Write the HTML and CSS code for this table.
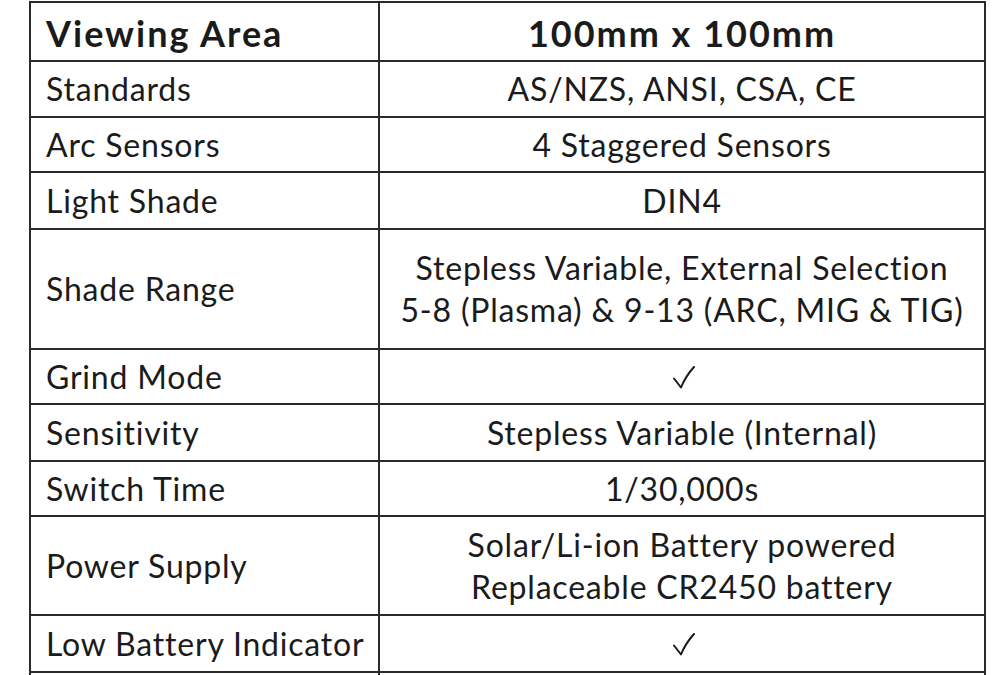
FILE: index.html
```html
<!DOCTYPE html>
<html lang="en">
<head>
<meta charset="utf-8">
<title>Specifications</title>
<link rel="stylesheet" href="styles.css">
</head>
<body>
<div class="specs">
  <div class="cell label head">Viewing Area</div>
  <div class="cell value head">100mm x 100mm</div>

  <div class="cell label">Standards</div>
  <div class="cell value">AS/NZS, ANSI, CSA, CE</div>

  <div class="cell label">Arc Sensors</div>
  <div class="cell value">4 Staggered Sensors</div>

  <div class="cell label">Light Shade</div>
  <div class="cell value">DIN4</div>

  <div class="cell label">Shade Range</div>
  <div class="cell value">Stepless Variable, External Selection<br>5-8 (Plasma) &amp; 9-13 (ARC, MIG &amp; TIG)</div>

  <div class="cell label">Grind Mode</div>
  <div class="cell value"><svg class="check" viewBox="0 0 22 23" width="22" height="23" aria-label="yes"><path d="M1 12.5 L8 21.5 C11 14 15.5 7 21 1" fill="none" stroke="#1b1b1b" stroke-width="2" stroke-linecap="round" stroke-linejoin="round"/></svg></div>

  <div class="cell label">Sensitivity</div>
  <div class="cell value">Stepless Variable (Internal)</div>

  <div class="cell label">Switch Time</div>
  <div class="cell value">1/30,000s</div>

  <div class="cell label">Power Supply</div>
  <div class="cell value">Solar/Li-ion Battery powered<br>Replaceable CR2450 battery</div>

  <div class="cell label">Low Battery Indicator</div>
  <div class="cell value"><svg class="check" viewBox="0 0 22 23" width="22" height="23" aria-label="yes"><path d="M1 12.5 L8 21.5 C11 14 15.5 7 21 1" fill="none" stroke="#1b1b1b" stroke-width="2" stroke-linecap="round" stroke-linejoin="round"/></svg></div>

  <div class="cell label"></div>
  <div class="cell value"></div>
</div>
</body>
</html>
```

FILE: styles.css
```css
html, body {
  margin: 0;
  padding: 0;
  background: #ffffff;
}

body {
  font-family: Lato, "Liberation Sans", sans-serif;
  color: #1b1b1b;
  overflow: hidden;
  height: 675px;
}

.specs {
  display: grid;
  grid-template-columns: 349px 606px;
  grid-template-rows: 59px 56px 55px 57px 120px 55px 57px 55px 99px 57px 60px;
  width: max-content;
  margin: 1px 0 0 29px;
  border-top: 2px solid #2a2a2a;
  border-left: 2px solid #2a2a2a;
}

.cell {
  box-sizing: border-box;
  border-right: 2px solid #2a2a2a;
  border-bottom: 2px solid #2a2a2a;
  display: flex;
  align-items: center;
  font-size: 32px;
  letter-spacing: 0.8px;
  line-height: 42px;
}

.label {
  padding-left: 15px;
}

.value {
  justify-content: center;
  text-align: center;
}

.head {
  font-size: 36px;
  font-weight: 700;
  letter-spacing: 2px;
  padding-top: 2px;
}

.check {
  display: block;
  margin-top: 2px;
  margin-left: 4px;
}
```
